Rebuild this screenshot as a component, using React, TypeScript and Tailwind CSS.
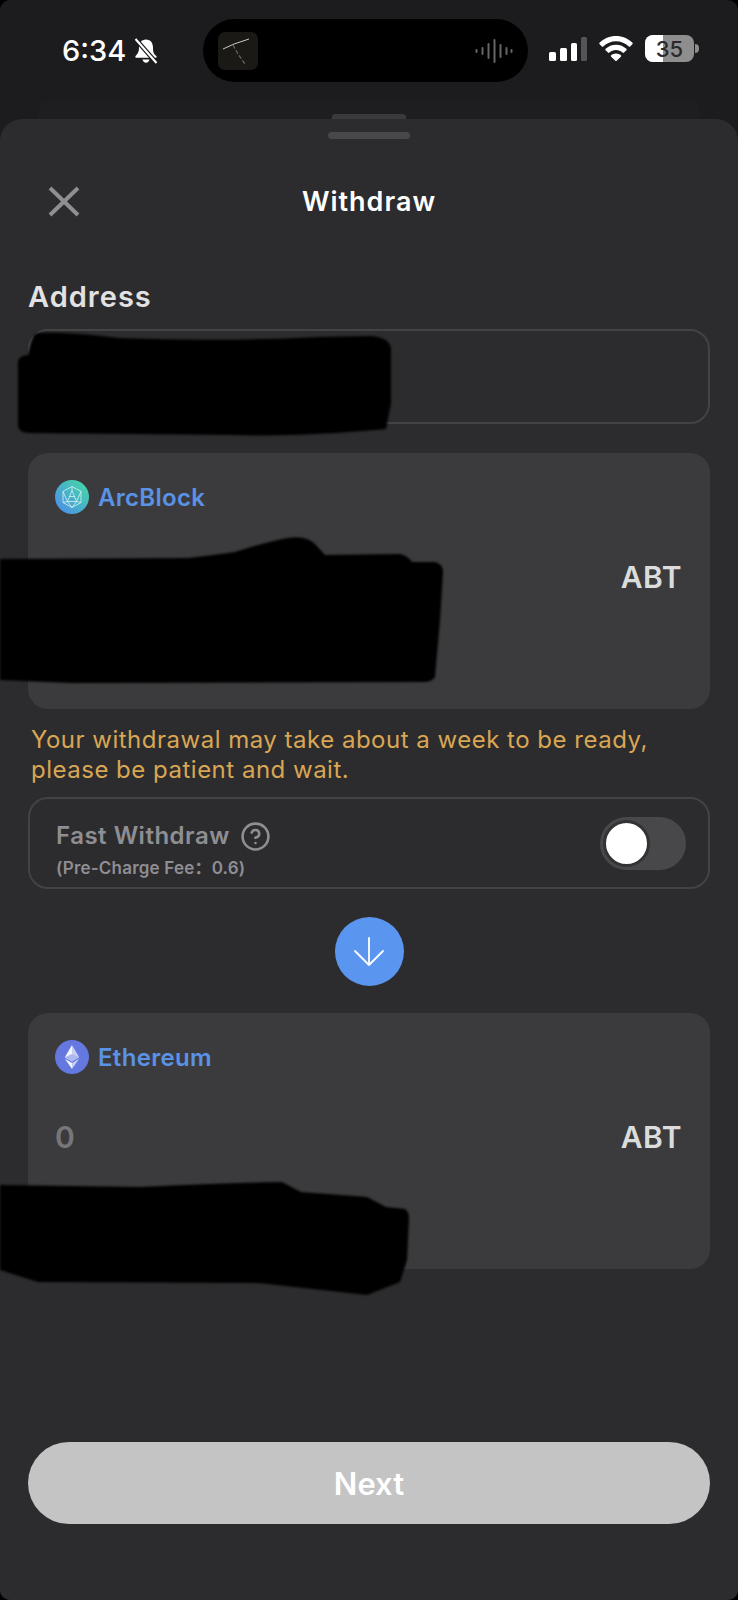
import { CircleHelp } from 'lucide-react'

const ArcBlockIcon = () => (
  <svg width="34" height="34" viewBox="0 0 34 34" className="shrink-0">
    <defs>
      <linearGradient id="arc" x1="0.1" y1="0.9" x2="0.9" y2="0.1">
        <stop offset="0" stopColor="#4c8fe8" />
        <stop offset="1" stopColor="#45d6a8" />
      </linearGradient>
    </defs>
    <circle cx="17" cy="17" r="17" fill="url(#arc)" />
    <g fill="none" stroke="#d8f4f0" strokeWidth="0.8" strokeLinejoin="round">
      <path d="M17 6.5 26 11.5V22.5L17 27.5 8 22.5V11.5Z" />
      <path d="M17 10.5 21.5 21.5H12.5Z" />
      <path d="M8 11.5 12.5 21.5 8 22.5M26 11.5 21.5 21.5 26 22.5M17 6.5V10.5M12.5 21.5 17 27.5 21.5 21.5M14.5 16.5H19.5" />
    </g>
  </svg>
)

const EthereumIcon = () => (
  <svg width="34" height="34" viewBox="0 0 34 34" className="shrink-0">
    <circle cx="17" cy="17" r="17" fill="#6478e0" />
    <path d="M17 5 9.8 17.2 17 21.4Z" fill="#f2f4ff" />
    <path d="M17 5 24.2 17.2 17 21.4Z" fill="#c6cef5" />
    <path d="M9.8 17.2 17 14 24.2 17.2 17 21.4Z" fill="#aeb8f0" />
    <path d="M9.8 18.7 17 22.9V29Z" fill="#f2f4ff" />
    <path d="M24.2 18.7 17 22.9V29Z" fill="#c6cef5" />
  </svg>
)

const NetworkCard = ({ icon, name, value }: { icon: React.ReactNode; name: string; value?: string }) => (
  <div className="mt-[29px] flex h-[256px] flex-col rounded-[20px] bg-[#3b3b3d] pl-[27px] pr-[28px] pt-[27px]">
    <div className="flex h-[34px] items-center gap-[9px]">
      {icon}
      <span className="pt-[2px] text-[24px] font-semibold leading-none tracking-[0.3px] text-[#5a92e6]">{name}</span>
    </div>
    <div className="mt-[40px] flex h-[46px] items-center justify-between">
      <span className="pt-[1px] text-[30px] font-semibold text-[#77777a]">{value}</span>
      <span className="text-[30px] font-semibold tracking-[0.5px] text-[#dcdcdc]">ABT</span>
    </div>
  </div>
)

export default function App() {
  return (
    <div className="relative h-[1600px] w-full overflow-hidden bg-black font-['Inter','Noto_Sans_CJK_SC',sans-serif]">
      <div className="flex h-full flex-col rounded-[10px] bg-[#1c1c1e]">
        {/* status bar */}
        <div className="flex h-[119px] flex-col">
          <div className="flex h-[100px] items-start">
            <div className="mt-[19px] flex h-[63px] w-[203px] items-center pl-[62px]">
              <span className="text-[29px] font-medium leading-none text-white">6:34</span>
              <svg width="24" height="26" viewBox="0 0 24 26" className="ml-[8px]">
                <path d="M12 1.5c-4.6 0-7 3.6-7 8 0 5-1.7 6.5-3.4 8.5-.6.8-.1 1.8.9 1.8h19c1 0 1.5-1 .9-1.8C19.700 16 19 14.500 19 9.500c0-4.400-2.400-8-7-8Z" fill="#fff" />
                <path d="M8.500 21.500h7c-.3 2-1.700 3.200-3.500 3.200s-3.200-1.200-3.500-3.200Z" fill="#fff" />
                <path d="M1.500 1 22.500 25" stroke="#1c1c1e" strokeWidth="4.500" />
                <path d="M1.500 1 22.500 25" stroke="#fff" strokeWidth="2" />
              </svg>
            </div>
            <div className="mt-[19px] flex h-[63px] w-[325px] items-center justify-between rounded-full bg-black pl-[15px] pr-[15px]">
              <svg width="40" height="38" viewBox="0 0 40 38">
                <rect width="40" height="38" rx="7" fill="#1b1916" />
                <path d="M5 17 16 12 31 7" stroke="#c9c9c4" strokeWidth="1" fill="none" />
                <path d="M15 13 20 22 27 32" stroke="#6b6963" strokeWidth="1.200" strokeDasharray="4 2" fill="none" />
              </svg>
              <svg width="38" height="24" viewBox="0 0 38 24" stroke="#666" strokeLinecap="round">
                <path d="M1.500 11v2" strokeWidth="2" />
                <path d="M7.500 9v6" strokeWidth="2" />
                <path d="M13.500 5v14" strokeWidth="2" />
                <path d="M19.500 1v22" strokeWidth="2" />
                <path d="M25.500 6v12" strokeWidth="2" />
                <path d="M31.500 9v6" strokeWidth="2" />
                <path d="M36.500 11v2" strokeWidth="2" />
              </svg>
            </div>
            <div className="mt-[17px] flex h-[63px] items-center pl-[21px]">
              <div className="flex h-[24px] items-end gap-[4px]">
                <div className="h-[9px] w-[7px] rounded-[1.500px] bg-white" />
                <div className="h-[13px] w-[7px] rounded-[1.500px] bg-white" />
                <div className="h-[18px] w-[6px] rounded-[1.500px] bg-white" />
                <div className="h-[24px] w-[6px] rounded-[1.500px] bg-[#555557]" />
              </div>
              <svg width="34" height="25" viewBox="0 0 34 25" className="ml-[12px]" fill="#fff">
                <path d="M17 0C10.600 0 4.800 2.500.500 6.700c-.4.4-.4 1 0 1.400l2.300 2.400c.4.4 1 .4 1.400 0C7.600 7.200 12.100 5.200 17 5.200s9.400 2 12.800 5.300c.4.4 1 .4 1.400 0l2.300-2.400c.4-.4.4-1 0-1.400C29.200 2.500 23.400 0 17 0Z" />
                <path d="M17 8.700c-4 0-7.700 1.600-10.400 4.100-.4.4-.4 1 0 1.400l2.400 2.400c.4.4 1 .4 1.400 0 1.700-1.600 4-2.500 6.600-2.500s4.900 1 6.600 2.500c.4.4 1 .4 1.400 0l2.400-2.400c.4-.4.4-1 0-1.400-2.700-2.500-6.400-4.100-10.400-4.100Z" />
                <path d="M17 17.500c-1.900 0-3.600.7-4.900 1.800-.4.4-.4 1 0 1.400l4.200 4c.4.4 1 .4 1.400 0l4.200-4c.4-.4.4-1 0-1.400-1.300-1.100-3-1.800-4.900-1.800Z" />
              </svg>
              <div className="ml-[12px] flex items-center">
                <div className="relative flex h-[27px] w-[49px] items-center justify-center overflow-hidden rounded-[8px] bg-[#8e8e8e]">
                  <div className="absolute inset-y-0 left-0 w-[18px] bg-white" />
                  <span className="relative text-[22px] font-medium leading-none text-[#2a2a2c]">35</span>
                </div>
                <div className="ml-[1px] h-[9px] w-[4px] rounded-r-full bg-[#8e8e8e]" />
              </div>
            </div>
          </div>
          <div className="mx-[38px] flex h-[19px] justify-center rounded-t-[12px] bg-[#1e1e20]">
            <div className="mt-[14px] h-[5px] w-[74px] rounded-t-[3px] bg-[#3a3a3c]" />
          </div>
        </div>

        {/* sheet */}
        <div className="flex flex-1 flex-col rounded-b-[10px] rounded-t-[22px] bg-[#2c2c2e] px-[28px]">
          <div className="mx-auto mt-[13px] h-[7px] w-[82px] rounded-full bg-[#48484a]" />

          <div className="relative mt-[32px] flex h-[60px] items-center justify-center">
            <svg width="32" height="31" viewBox="0 0 32 31" className="absolute left-[20px]" stroke="#8e8e93" strokeWidth="4">
              <path d="M2 2 30 29M30 2 2 29" />
            </svg>
            <span className="pt-[2px] text-[27px] font-semibold tracking-[1px] text-white">Withdraw</span>
          </div>

          <div className="mt-[51px] h-[30px] text-[29px] font-semibold leading-[30px] tracking-[1px] text-[#e2e2e2]">Address</div>
          <div className="mt-[17px] h-[95px] rounded-[20px] border-2 border-[#434345]" />

          <NetworkCard icon={<ArcBlockIcon />} name="ArcBlock" />

          <p className="mt-[16px] pl-[3px] text-[24px] leading-[30px] tracking-[0.5px] text-[#d9a654]">
            Your withdrawal may take about a week to be ready,
            <br />
            please be patient and wait.
          </p>

          <div className="mt-[12px] flex h-[92px] items-center justify-between rounded-[20px] border-2 border-[#434345] pl-[26px] pr-[22px]">
            <div className="mt-[12px] flex flex-col">
              <div className="flex items-center gap-[10px]">
                <span className="text-[24px] font-semibold leading-[30px] tracking-[0.5px] text-[#8e8e93]">Fast Withdraw</span>
                <CircleHelp size={31} strokeWidth={2} className="text-[#8e8e93]" />
              </div>
              <span className="mt-[6px] text-[17px] font-semibold leading-[20px] tracking-[0.2px] text-[#8e8e93]">(Pre-Charge Fee：0.6)</span>
            </div>
            <div className="flex h-[53px] w-[86px] items-center rounded-full bg-[#48484a] pl-[3px]">
              <div className="h-[47px] w-[47px] rounded-full border-[3px] border-[#333335] bg-white" />
            </div>
          </div>

          <div className="mx-auto mt-[28px] flex h-[69px] w-[69px] items-center justify-center rounded-full bg-[#5a96f0]">
            <svg width="32" height="32" viewBox="0 0 32 32" fill="none" stroke="#fff" strokeWidth="1.800" strokeLinecap="round" strokeLinejoin="round">
              <path d="M16 2V29M2 15 16 29 30 15" />
            </svg>
          </div>

          <div className="-mt-[2px]">
            <NetworkCard icon={<EthereumIcon />} name="Ethereum" value="0" />
          </div>

          <div className="mb-[76px] mt-auto flex h-[82px] items-center justify-center rounded-full bg-[#c4c4c4]">
            <span className="pt-[3px] text-[31px] font-semibold text-white">Next</span>
          </div>
        </div>
      </div>

      {/* scribbled-out parts of the screenshot */}
      <svg width="738" height="1600" viewBox="0 0 738 1600" className="pointer-events-none absolute left-0 top-0 blur-[1px]" fill="#000">
        <path d="M35 334 Q40 332 60 333 Q90 334 118 338 Q220 342 320 337 L372 336 Q391 338 391 350 L391 403 L386 429 Q300 437 235 435 L28 433 Q18 432 18 425 L18 362 Q18 356 28 355 L33 338Z" />
        <path d="M0 559 L188 558 Q215 555 235 552 Q260 544 282 539 Q305 534 315 544 L325 555 L400 554 Q408 556 412 562 L435 562 Q443 564 443 572 L440 620 L435 677 Q432 682 424 682 L71 683 L0 680Z" />
        <path d="M0 1185 L141 1187 Q220 1183 282 1182 L301 1192 L367 1197 L386 1207 L405 1209 Q409 1212 409 1218 L407 1260 L400 1282 L367 1295 L259 1283 L38 1282 L0 1270Z" />
      </svg>
    </div>
  )
}
